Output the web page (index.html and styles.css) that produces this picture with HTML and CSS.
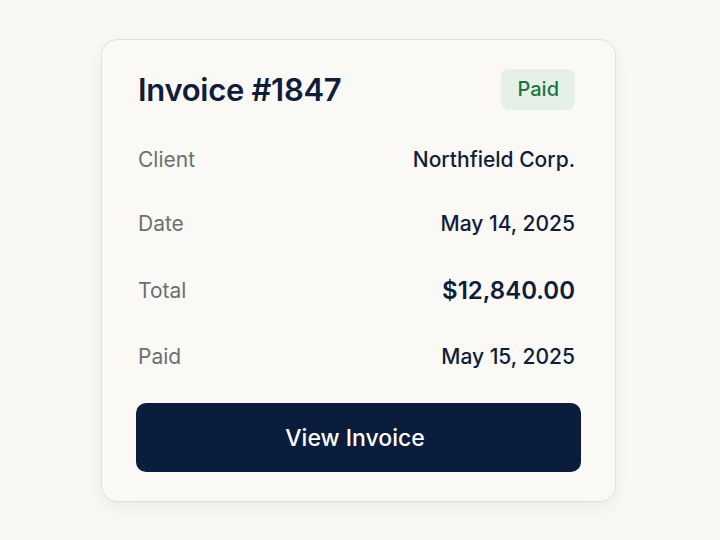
FILE: index.html
```html
<!DOCTYPE html>
<html lang="en">
<head>
    <meta charset="UTF-8">
    <meta name="viewport" content="width=device-width, initial-scale=1.0">
    <title>Invoice #1847</title>
    <link rel="stylesheet" href="styles.css">
</head>
<body>
    <div class="card">
        <div class="card-header">
            <h1>Invoice #1847</h1>
            <span class="badge">Paid</span>
        </div>
        <div class="details">
            <div class="row">
                <span class="label">Client</span>
                <span class="value">Northfield Corp.</span>
            </div>
            <div class="row">
                <span class="label">Date</span>
                <span class="value">May 14, 2025</span>
            </div>
            <div class="row row-total">
                <span class="label">Total</span>
                <span class="value">$12,840.00</span>
            </div>
            <div class="row row-last">
                <span class="label">Paid</span>
                <span class="value">May 15, 2025</span>
            </div>
        </div>
        <button class="view-btn">View Invoice</button>
    </div>
</body>
</html>
```

FILE: styles.css
```css
body {
    font-family: Inter, "Noto Sans", sans-serif;
    background: #f9f8f5;
    margin: 0;
    padding-top: 39px;
    height: 540px;
    box-sizing: border-box;
}

.card {
    width: 515px;
    margin: 0 0 0 101px;
    box-sizing: border-box;
    background: #faf9f6;
    border: 1.5px solid #e2e0da;
    border-radius: 16px;
    box-shadow: 0 6px 18px rgba(0, 0, 0, 0.06);
    padding: 29px 34px 29px;
    display: flex;
    flex-direction: column;
}

.card-header {
    display: flex;
    justify-content: space-between;
    align-items: center;
    padding: 0 6px 0 2px;
    height: 41px;
}

.card-header h1 {
    margin: 0;
    font-size: 31px;
    font-weight: 600;
    color: #0f1d3a;
    letter-spacing: -0.3px;
}

.badge {
    background: #e5f1e6;
    color: #1d7443;
    font-size: 20px;
    font-weight: 500;
    padding: 0 16px;
    height: 41px;
    line-height: 41px;
    border-radius: 8px;
}

.details {
    margin-top: 17px;
    display: flex;
    flex-direction: column;
}

.row {
    display: flex;
    justify-content: space-between;
    align-items: center;
    height: 64px;
    padding: 0 6px 0 2px;
}

.row-total {
    height: 70px;
}

.row-last {
    height: 62px;
}

.label {
    font-size: 21px;
    color: #6c6f76;
}

.value {
    font-size: 21px;
    font-weight: 500;
    color: #0f1d3a;
}

.row-total .value {
    font-size: 24px;
    font-weight: 600;
}

.view-btn {
    margin-top: 16px;
    height: 69px;
    padding: 0 7px 0 0;
    border: none;
    border-radius: 10px;
    background: #0b1d3c;
    color: #ffffff;
    font-family: inherit;
    font-size: 23px;
    font-weight: 500;
    cursor: pointer;
}
```
